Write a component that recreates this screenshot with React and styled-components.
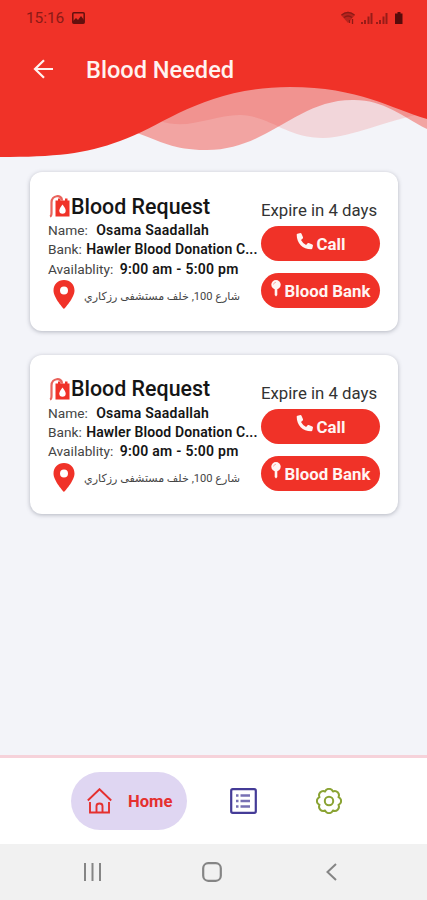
import React from 'react'
import styled, { createGlobalStyle } from 'styled-components'

const red = '#f03228'

const GlobalStyle = createGlobalStyle`
  * {
    box-sizing: border-box;
  }
  body {
    margin: 0;
    background: #f3f4f9;
    font-family: Roboto, 'DejaVu Sans', sans-serif;
  }
`

const Screen = styled.div`
  display: flex;
  flex-direction: column;
  width: 427px;
  height: 900px;
  overflow: hidden;
  background: #f3f4f9;
`

const Header = styled.header`
  position: relative;
  height: 172px;
  flex: none;
`

const Waves = styled.svg`
  position: absolute;
  top: 0;
  left: 0;
`

const StatusBar = styled.div`
  position: relative;
  display: flex;
  align-items: center;
  height: 36px;
  padding: 0 23px 0 26px;
  font-size: 15.5px;
  letter-spacing: -0.1px;
  color: #8c1a16;
  & > svg:first-of-type {
    margin-left: 8px;
  }
  & > svg:last-of-type {
    margin-left: auto;
  }
`

const TitleBar = styled.div`
  position: relative;
  display: flex;
  align-items: center;
  height: 66px;
  padding-left: 33px;
  gap: 32px;
`

const Title = styled.h1`
  margin: 2px 0 0;
  font-size: 23.6px;
  font-weight: 500;
  color: #fff3f0;
`

const List = styled.main`
  flex: 1;
  display: flex;
  flex-direction: column;
  gap: 23.5px;
  padding: 0 29px 0 30px;
`

const Card = styled.section`
  display: flex;
  gap: 3px;
  height: 159px;
  padding: 22px 18px 0;
  border-radius: 12px;
  background: white;
  box-shadow: 0 1px 4px rgba(60, 65, 85, 0.35);
`

const Details = styled.div`
  width: 210px;
`

const CardTitle = styled.h2`
  display: flex;
  align-items: center;
  margin: -1px 0 1px;
  height: 26px;
  font-size: 21.4px;
  font-weight: 500;
  white-space: nowrap;
  color: #151515;
`

const Line = styled.div`
  height: 19.3px;
  line-height: 20.3px;
  font-size: 13.7px;
  color: #444;
  white-space: nowrap;
  & > b {
    font-size: 14px;
    font-weight: 600;
    letter-spacing: ${(p) => p.$spacing}px;
    color: #151515;
    margin-left: ${(p) => p.$gap}px;
  }
`

const Address = styled.div`
  display: flex;
  align-items: center;
  gap: 9px;
  height: 34px;
  padding-left: 5px;
  font-size: 11.1px;
  color: #444;
  & > span {
    padding-top: 3px;
  }
`

const Actions = styled.div`
  width: 119px;
  display: flex;
  flex-direction: column;
`

const Expiry = styled.div`
  height: 32px;
  padding-top: 6px;
  line-height: 20px;
  font-size: 16.8px;
  color: #333;
  white-space: nowrap;
`

const Button = styled.button`
  display: flex;
  align-items: center;
  justify-content: center;
  gap: 4px;
  height: 35px;
  margin: 0 0 12px;
  padding: 1px 0 0;
  border: 0;
  border-radius: 18px;
  background: ${red};
  color: #fff5f3;
  font: 700 16.8px Roboto, sans-serif;
  white-space: nowrap;
  & > svg {
    flex: none;
    margin-bottom: 6px;
  }
`

const TabBar = styled.nav`
  display: flex;
  align-items: center;
  height: 89px;
  padding-left: 71px;
  border-top: 3px solid #f6d2da;
  background: white;
`

const ActiveTab = styled.div`
  display: flex;
  align-items: center;
  gap: 16px;
  width: 116px;
  height: 58px;
  padding-left: 16px;
  border-radius: 29px;
  background: #dfd6f2;
  color: #e5302f;
  font-size: 16.6px;
  font-weight: 700;
`

const Tab = styled.div`
  display: flex;
  margin-left: ${(p) => p.$left}px;
`

const SystemBar = styled.div`
  display: grid;
  grid-template-columns: 119px 124px auto;
  align-items: center;
  height: 56px;
  padding-left: 83px;
  background: #f1f1f1;
`

const HeaderWaves = () => (
  <Waves width="427" height="172" viewBox="0 0 427 172">
    <path
      d="M160 121C188 131 212 115 240 115C271 116 286 138 323 138C355 137 381 121 427 113V80H160Z"
      fill={red}
      opacity="0.15"
    />
    <path
      d="M137 133C160 141 174 150 205 150C267 151 296 100 352 100C382 99 402 116 427 129V80H137Z"
      fill={red}
      opacity="0.41"
    />
    <path
      d="M0 0H427V119C392 109 359 87 290 87C204 87 165 125 120 141C85 154 55 157 0 157Z"
      fill={red}
    />
  </Waves>
)

const PictureIcon = () => (
  <svg width="13" height="12" viewBox="0 0 13 12">
    <rect x="0.8" y="0.8" width="11.4" height="10.4" rx="1" fill="none" stroke="#64100e" strokeWidth="1.5" />
    <path d="M1 9l3-3 2 2 3-4 3 4v3H1z" fill="#64100e" />
  </svg>
)

const SignalIcons = () => (
  <svg width="63" height="14" viewBox="0 0 63 14">
    <path d="M0 4Q7-2.500 14 4L7 12z" fill="#8c1a16" opacity="0.55" />
    <g fill="none" stroke="#8c1a16" strokeWidth="1.3">
      <path d="M.5 4Q7 -1 13.500 4M3 6.500Q7 3.500 11 6.500" />
      <path d="M11.500 8v5M8.500 9v3" />
    </g>
    <path
      d="M20 11h2v2H20zM23 9h2v4H23zM26.500 5.500h2v7.500h-2zM29.500 2h2v11h-2zM35 11h2v2H35zM38 9h2v4H38zM41.500 5.500h2v7.500h-2zM44.500 2h2v11h-2z"
      fill="#981c18"
    />
    <path d="M56.500 1h3v1.500h2V13h-7.500V2.500h2.500z" fill="#570b0b" />
  </svg>
)

const BackIcon = () => (
  <svg width="21" height="20" viewBox="0 0 21 20" fill="none" stroke="#fff3f0" strokeWidth="2.2">
    <path d="M20 10H2.500M11 1.200L2 10l9 8.800" />
  </svg>
)

const BloodBagIcon = () => (
  <svg width="23" height="24" viewBox="0 0 23 24">
    <path d="M2 22.500Q3.500 22 3.500 19V8.500C3.500 1 14 0 14 6.500" fill="none" stroke="#e9635c" strokeWidth="2.200" />
    <path d="M7.500 6.500H10V4.500h2.500v2h4.500v-2h2.500v2h2V22.500h-14z" fill={red} />
    <path d="M14.500 10.500q-3.200 4-3.200 6a3.200 3.200 0 0 0 6.400 0q0-2-3.200-6z" fill="white" />
  </svg>
)

const PinIcon = () => (
  <svg width="22" height="29" viewBox="0 0 22 29">
    <path
      fillRule="evenodd"
      d="M11 0C4.800 0 .5 4.500 .5 10.500C.5 18 11 29 11 29S21.500 18 21.500 10.500C21.500 4.500 17.200 0 11 0ZM11 6.500a4 4 0 1 1 0 8a4 4 0 0 1 0-8Z"
      fill={red}
    />
  </svg>
)

const PhoneIcon = () => (
  <svg width="17" height="17" viewBox="0 0 17 17">
    <path
      d="M1.500 .7L4.500 0Q5.200 0 5.500 .7L7 4.300Q7.200 5 6.700 5.400L5 6.900Q6.800 10.300 10.100 12L11.600 10.300Q12.100 9.800 12.700 10L16.300 11.500Q17 11.800 17 12.500L16.300 15.500Q16 16.300 15.300 16.300C6.500 16.300 .7 10 .7 1.700Q.7 .9 1.500 .7Z"
      fill="#fff5f3"
    />
  </svg>
)

const MapPinIcon = () => (
  <svg width="10" height="17" viewBox="0 0 10 17">
    <circle cx="5" cy="4.700" r="4.700" fill="#fff5f3" />
    <path d="M3.700 9h2.600v6l-1.300 1.500-1.300-1.500z" fill="#fff5f3" />
    <path d="M2.500 4.500Q3 2.300 5 2.200" fill="none" stroke="#f6a49f" strokeWidth="0.9" />
  </svg>
)

const HomeIcon = () => (
  <svg width="25" height="27" viewBox="0 0 25 27" fill="none" stroke="#e5302f" strokeWidth="1.900">
    <path d="M.8 12.500L12.500 1.200L24.200 12.500M3 14V24.500H9.500V18Q9.500 15.500 12.500 15.500T15.500 18V24.500H22V14M9.500 24.500H15.500" />
  </svg>
)

const ListIcon = () => (
  <svg width="27" height="26" viewBox="0 0 27 26" fill="none">
    <rect x="1.200" y="1.200" width="24.600" height="23.600" rx="1.500" stroke="#443b97" strokeWidth="2.200" />
    <path d="M10.500 7.500h9.500M10.500 13h9.500M10.500 18.500h9.500M6 7.500h2.500M6 13h2.500M6 18.500h2.500" stroke="#7770b4" strokeWidth="2.400" />
  </svg>
)

const GearIcon = () => (
  <svg width="26" height="26" viewBox="0 0 26 26" fill="none" stroke="#8aa333" strokeWidth="2">
    <path
      strokeLinejoin="round"
      d="M9.100 3.500A4.200 4.200 0 0 1 16.900 3.500A4.200 4.200 0 0 1 22.500 9.100A4.200 4.200 0 0 1 22.500 16.900A4.200 4.200 0 0 1 16.900 22.500A4.200 4.200 0 0 1 9.100 22.500A4.200 4.200 0 0 1 3.500 16.900A4.200 4.200 0 0 1 3.500 9.100A4.200 4.200 0 0 1 9.100 3.500Z"
    />
    <circle cx="13" cy="13" r="4.200" />
  </svg>
)

const RecentsIcon = () => (
  <svg width="19" height="18" viewBox="0 0 19 18" stroke="#858585" strokeWidth="2">
    <path d="M2 0v18M9.500 0v18M17 0v18" />
  </svg>
)

const SquareIcon = () => (
  <svg width="20" height="20" viewBox="0 0 20 20">
    <rect x="1.200" y="1.200" width="17.600" height="17.600" rx="5" fill="none" stroke="#858585" strokeWidth="2.200" />
  </svg>
)

const ChevronIcon = () => (
  <svg width="11" height="18" viewBox="0 0 11 18">
    <path d="M10 1L1.500 9l8.500 8" fill="none" stroke="#858585" strokeWidth="2" />
  </svg>
)

const requests = [
  { id: 1, name: 'Osama Saadallah', bank: 'Hawler Blood Donation C...', hours: '9:00 am - 5:00 pm' },
  { id: 2, name: 'Osama Saadallah', bank: 'Hawler Blood Donation C...', hours: '9:00 am - 5:00 pm' },
]

const RequestCard = ({ name, bank, hours }) => (
  <Card>
    <Details>
      <CardTitle>
        <BloodBagIcon />
        Blood Request
      </CardTitle>
      <Line $gap={5} $spacing={0.25}>
        Name: <b>{name}</b>
      </Line>
      <Line $gap={1} $spacing={0.12}>
        Bank: <b>{bank}</b>
      </Line>
      <Line $gap={3} $spacing={0.27}>
        Availablity: <b>{hours}</b>
      </Line>
      <Address>
        <PinIcon />
        <span dir="rtl">شارع 100, خلف مستشفى رزكاري</span>
      </Address>
    </Details>
    <Actions>
      <Expiry>Expire in 4 days</Expiry>
      <Button>
        <PhoneIcon />
        Call
      </Button>
      <Button>
        <MapPinIcon />
        Blood Bank
      </Button>
    </Actions>
  </Card>
)

const App = () => (
  <Screen>
    <GlobalStyle />
    <Header>
      <HeaderWaves />
      <StatusBar>
        15:16
        <PictureIcon />
        <SignalIcons />
      </StatusBar>
      <TitleBar>
        <BackIcon />
        <Title>Blood Needed</Title>
      </TitleBar>
    </Header>
    <List>
      {requests.map((r) => (
        <RequestCard key={r.id} {...r} />
      ))}
    </List>
    <TabBar>
      <ActiveTab>
        <HomeIcon />
        Home
      </ActiveTab>
      <Tab $left={43}>
        <ListIcon />
      </Tab>
      <Tab $left={59}>
        <GearIcon />
      </Tab>
    </TabBar>
    <SystemBar>
      <RecentsIcon />
      <SquareIcon />
      <ChevronIcon />
    </SystemBar>
  </Screen>
)

export default App
